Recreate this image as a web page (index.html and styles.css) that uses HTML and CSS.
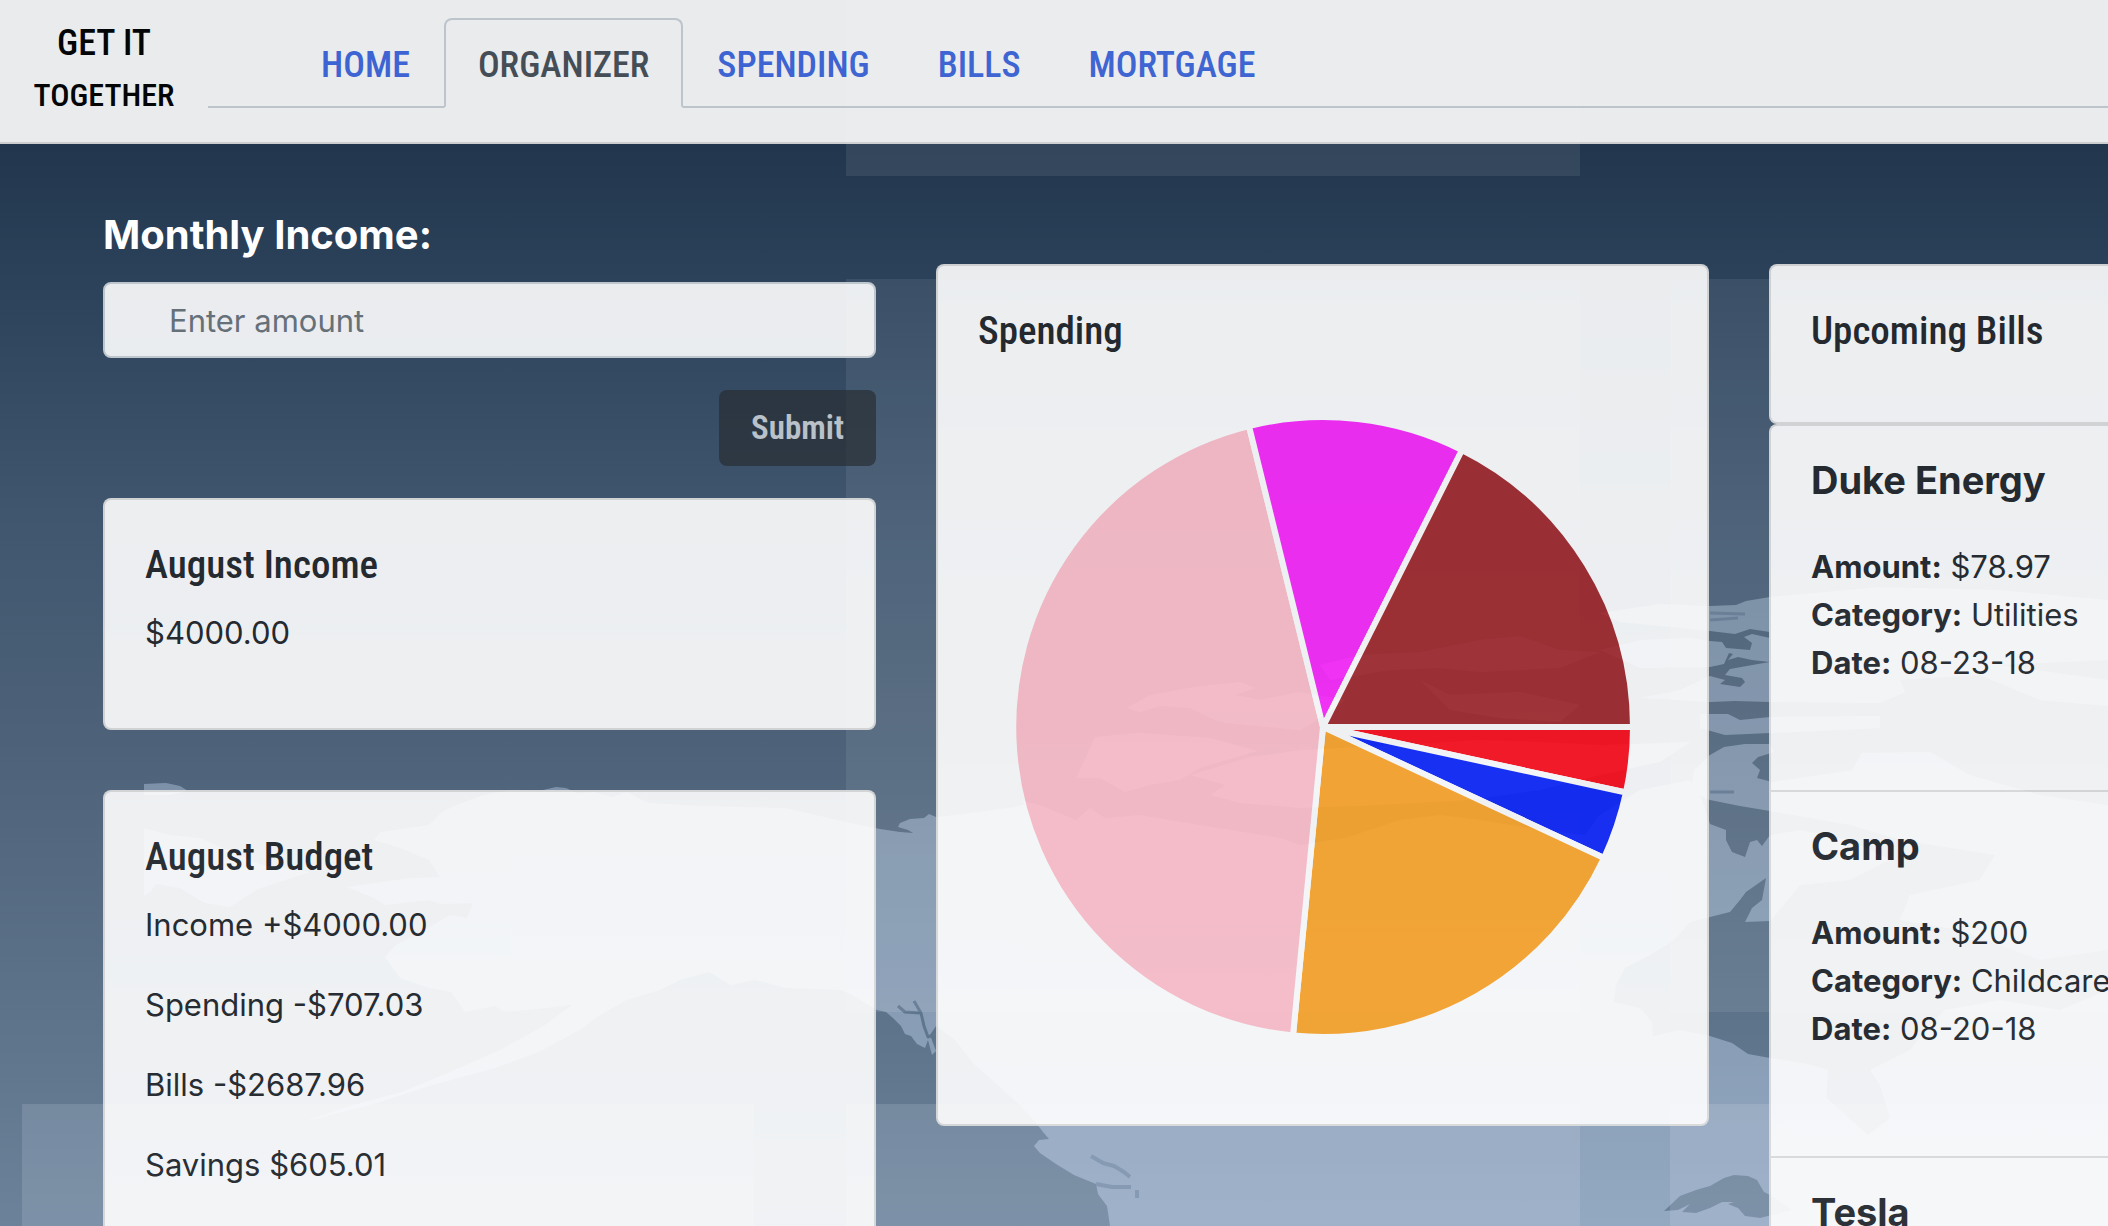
FILE: index.html
```
<!DOCTYPE html>
<html lang="en">
<head>
<meta charset="utf-8">
<meta name="viewport" content="width=device-width, initial-scale=1">
<title>Get It Together - Organizer</title>
<link rel="stylesheet" href="styles.css">
</head>
<body>
<div class="page">
  <svg class="backdrop" viewBox="0 0 2108 1226" preserveAspectRatio="xMidYMin slice" aria-hidden="true">
    <defs>
      <linearGradient id="land" gradientUnits="userSpaceOnUse" x1="0" y1="600" x2="0" y2="1226">
        <stop offset="0" stop-color="#a4b8d0"/>
        <stop offset="1" stop-color="#bacee8"/>
      </linearGradient>
    </defs>
    <g fill="url(#land)" opacity=".5" fill-rule="evenodd">
      <!-- eastern Siberia -->
      <path d="M144 784L166 783L180 786L188 791L170 795L144 795Z"/>
      <path d="M144 828L170 835L200 838L232 852L262 865L310 872L288 879L258 889L230 907L205 903L180 888L156 884L150 892L144 896Z"/>
      <!-- Alaska and mainland Canada, with the great lake cut out -->
      <path d="M374 840L380 832L429 825L442 812L456 805L484 795L510 790L539 791L556 787L566 788L577 793L594 792L612 797L627 792L648 803L703 806L786 808L846 822L880 829L900 832L913 833L908 830L898 827L900 823L910 819L924 818L929 814L936 817L955 815L1015 807L1025 804L1020 800L1040 805L1076 820L1090 808L1105 818L1140 815L1200 825L1280 838L1300 845L1345 838L1400 820L1440 815L1480 820L1540 830L1585 835L1600 815L1640 790L1690 780L1702 800L1710 824V917L1690 922L1674 940L1650 955L1625 968L1616 985L1614 1002L1640 1008L1652 1022L1653 1036L1680 1030L1710 1036L1732 1043L1748 1054L1770 1058L1808 1064L1828 1070L1826 1098L1840 1110L1868 1135L1890 1118L1880 1085L1870 1070L1910 1050L1930 1025L1945 1010L2000 1000L2060 1010L2108 990V1226H1110L1107 1206L1098 1194L1096 1184L1074 1175L1056 1164L1040 1153L1034 1146L1039 1140L1049 1139L1043 1132L1037 1124L1020 1105L998 1085L975 1065L955 1040L936 1026L930 1035L936 1051L932 1055L928 1040L925 1048L917 1044L911 1036L905 1034L901 1026L893 1018L886 1012L877 1010L850 994L840 990L786 988L755 980L731 985L709 972L680 980L660 990L627 1000L600 1015L583 1028L539 1052L495 1068L429 1086L380 1102L303 1122L350 1106L402 1092L450 1072L500 1050L545 1025L572 1005L539 1009L505 1012L495 1006L465 1012L451 992L429 988L400 978L385 957L396 945L425 930L450 915L467 918L473 903L440 904L429 900L385 905L374 898L347 887L410 878L440 877L429 860L400 848ZM1664 1211L1680 1196L1696 1190L1710 1186L1724 1178L1734 1175L1748 1176L1757 1180L1764 1192L1772 1196L1792 1210L1760 1218L1745 1216L1738 1208L1728 1204L1734 1202L1722 1202L1710 1208L1696 1213L1682 1212L1690 1204L1678 1210Z"/>
      <!-- Arctic islands -->
      <path d="M1127 708L1150 695L1195 687L1240 682L1255 688L1235 695L1260 700L1300 692L1345 700L1330 712L1300 730L1220 722L1190 708L1160 706L1140 712Z"/>
      <path d="M1095 737L1140 733L1210 738L1258 751L1200 768L1180 780L1150 785L1125 792L1100 778L1076 778Z"/>
      <path d="M1250 757L1300 750L1400 745L1480 740L1540 742L1600 745L1690 742L1660 762L1600 775L1540 790L1470 800L1380 805L1300 808L1240 803L1210 795L1225 785L1190 775Z"/>
      <path d="M1320 665L1360 655L1420 652L1480 640L1520 636L1560 650L1600 652L1560 668L1480 672L1440 668L1390 670L1330 680Z"/>
      <path d="M1420 680L1450 695L1520 692L1580 705L1560 722L1500 718L1450 710Z"/>
      <path d="M1600 613L1660 604L1710 606L1736 605L1746 601L1770 597L1880 587L2000 590L2108 600V660L2000 665L2108 680V706L2040 700L1980 675L1900 680L1905 692L1880 703L1770 702L1735 701L1710 702L1640 698L1680 690L1710 676L1725 680L1720 684L1740 687L1745 682L1742 678L1725 675L1730 669L1758 664L1770 662L1752 660L1738 657L1728 660L1733 654L1729 653L1724 664L1710 667L1640 668L1600 650L1640 640L1690 638L1710 641L1722 642L1726 648L1750 650L1752 643L1744 637L1752 634L1770 638V632L1750 629L1735 634L1710 631L1620 622Z"/>
      <path d="M1700 714L1728 714L1740 720L1770 717L1880 716L1880 728L1770 733L1725 735L1700 728Z"/>
      <path d="M1694 770L1710 755L1724 747L1745 744L1770 744L1774 752L1768 754L1758 757L1752 763L1760 770L1757 778L1772 782L1852 770L1862 753L1930 752L1970 775L2040 795L2108 805V950L2040 960L1960 930L1900 920L1910 895L1980 880L1995 855L1900 840L1850 825L1770 811L1740 806L1725 803L1710 800L1690 792Z"/>
      <path d="M1710 824L1726 830L1726 840L1732 852L1745 857L1750 842L1757 840L1762 846L1770 835L1800 830L1850 840L1890 860L1850 880L1800 885L1770 921L1745 922L1752 908L1762 900L1766 878L1756 885L1746 892L1740 900L1730 912L1710 917Z"/>
    </g>
    <!-- inlets and straits -->
    <g fill="none" stroke="#5f768f" stroke-width="3" stroke-linejoin="round">
      <path d="M898 1006L905 1012L921 1013L914 1001M921 1013L924 1026L928 1037L936 1034"/>
      <path d="M1710 792L1734 792M1710 613L1745 614M1710 620L1738 618"/>
      <path stroke="#768da7" stroke-width="4" d="M1091 1156L1103 1163L1114 1166L1124 1172L1130 1177M1096 1184L1112 1187L1131 1187M1137 1190V1198"/>
    </g>
    <!-- translucent panels -->
    <g fill="#fff" fill-opacity=".08">
      <rect x="846" y="-10" width="734" height="186"/>
      <rect x="846" y="279" width="734" height="733"/>
      <rect x="1670" y="279" width="734" height="733"/>
    </g>
    <g fill="#e8f2ff" fill-opacity=".14">
      <rect x="22" y="1104" width="732" height="200"/>
      <rect x="846" y="1104" width="734" height="200"/>
      <rect x="1670" y="1104" width="734" height="200"/>
    </g>
  </svg>

  <header class="navbar">
    <a class="brand" href="#"><span class="brand-top">GET IT</span><span class="brand-bottom">TOGETHER</span></a>
    <nav class="tabs">
      <a class="tab" href="#">HOME</a>
      <a class="tab tab-active" href="#" aria-current="page">ORGANIZER</a>
      <a class="tab" href="#">SPENDING</a>
      <a class="tab" href="#">BILLS</a>
      <a class="tab" href="#">MORTGAGE</a>
    </nav>
  </header>

  <main class="board">
    <div class="column">
      <form class="income-form">
        <label class="income-label" for="income">Monthly Income:</label>
        <input class="income-input" id="income" type="text" placeholder="Enter amount">
        <button class="submit" type="submit" disabled>Submit</button>
      </form>
      <section class="card">
        <h2 class="card-title">August Income</h2>
        <p class="line">$4000.00</p>
      </section>
      <section class="card">
        <h2 class="card-title">August Budget</h2>
        <p class="line">Income +$4000.00</p>
        <p class="line">Spending -$707.03</p>
        <p class="line">Bills -$2687.96</p>
        <p class="line">Savings $605.01</p>
      </section>
    </div>

    <div class="column column-offset">
      <section class="card">
        <h2 class="card-title">Spending</h2>
        <svg class="pie" viewBox="-310 -310 620 620" role="img" aria-label="Spending by category">
          <g stroke="#fff" stroke-width="6" stroke-linejoin="round">
            <path fill="#fd0d1b" d="M0 0L310 0A310 310 0 0 1 303 65.5Z"/>
            <path fill="#0d25fa" d="M0 0L303 65.5A310 310 0 0 1 281 131Z"/>
            <path fill="#fda529" d="M0 0L281 131A310 310 0 0 1 -30 308.500Z"/>
            <path fill="#ffc0cb" d="M0 0L-30 308.500A310 310 0 0 1 -74 -301Z"/>
            <path fill="#fb28fc" d="M0 0L-74 -301A310 310 0 0 1 139 -277Z"/>
            <path fill="#a22a2d" d="M0 0L139 -277A310 310 0 0 1 310 0Z"/>
          </g>
        </svg>
      </section>
    </div>

    <div class="column column-offset">
      <section class="card card-head">
        <h2 class="card-title">Upcoming Bills</h2>
      </section>
      <ul class="bills">
        <li class="bill">
          <h3 class="bill-name">Duke Energy</h3>
          <p class="bill-line"><b>Amount:</b> $78.97</p>
          <p class="bill-line"><b>Category:</b> Utilities</p>
          <p class="bill-line"><b>Date:</b> 08-23-18</p>
        </li>
        <li class="bill">
          <h3 class="bill-name">Camp</h3>
          <p class="bill-line"><b>Amount:</b> $200</p>
          <p class="bill-line"><b>Category:</b> Childcare</p>
          <p class="bill-line"><b>Date:</b> 08-20-18</p>
        </li>
        <li class="bill">
          <h3 class="bill-name">Tesla</h3>
        </li>
      </ul>
    </div>
  </main>
</div>
</body>
</html>
```
FILE: styles.css
```
* { box-sizing: border-box; }

body {
  margin: 0;
  color: #212529;
  font: 31px/48px Inter, "Liberation Sans", sans-serif;
}

.page {
  position: relative;
  height: 100vh;
  overflow: hidden;
  background: linear-gradient(#22374e 0, #22374e 12%, #2d445c 25%, #3f566e 42%, #4d6279 60%, #5e748b 84%, #6c829a 100%);
}

/* map artwork behind all content */
.backdrop {
  position: absolute;
  inset: 0;
  width: 100%;
  height: 100%;
}

.navbar {
  position: relative;
  display: flex;
  align-items: flex-start;
  height: 144px;
  background: #fff;
  border-bottom: 2px solid #dfdfdf;
  opacity: .9;
}

.brand {
  display: flex;
  flex-direction: column;
  flex: 0 0 208px;
  padding-top: 17px;
  color: #000;
  font-family: "Roboto Condensed", Roboto, sans-serif;
  font-weight: 500;
  line-height: 52px;
  text-align: center;
  text-decoration: none;
}
.brand-top { font-size: 36px; }
.brand-bottom { font-size: 32px; }

.tabs {
  display: flex;
  flex: 1;
  height: 90px;
  margin-top: 18px;
  padding-left: 79px;
  border-bottom: 2px solid #ced4da;
}
.tab {
  height: 90px;
  padding: 0 32px;
  border: 2px solid transparent;
  border-radius: 8px 8px 0 0;
  color: #4169e1;
  font: 500 36px/90px "Roboto Condensed", Roboto, sans-serif;
  text-decoration: none;
}
.tab-active {
  border-color: #ced4da #ced4da #fff;
  background: #fff;
  color: #495057;
}

.board {
  position: relative;
  display: grid;
  grid-template-columns: repeat(3, minmax(773px, 1fr));
  align-items: start;
  gap: 60px;
  padding: 67px 103px;
}
.column-offset { padding-top: 53px; }

.income-form {
  display: flex;
  flex-direction: column;
  margin-bottom: 32px;
}
.income-label {
  margin-bottom: 23px;
  color: #fff;
  font-size: 40px;
  font-weight: 700;
}
.income-input {
  height: 76px;
  margin-bottom: 32px;
  padding: 0 64px;
  border: 2px solid #ced4da;
  border-radius: 8px;
  background: #fff;
  font: inherit;
  opacity: .9;
}
.income-input::placeholder { color: #6c757d; opacity: 1; }
.submit {
  align-self: flex-end;
  height: 76px;
  padding: 0 32px;
  border: 0;
  border-radius: 8px;
  background: #272b30;
  color: #fff;
  font: 600 33px/48px "Roboto Condensed", Roboto, sans-serif;
  opacity: .65;
}

.card {
  margin-bottom: 60px;
  padding: 41px 40px 39px;
  border: 2px solid rgba(0, 0, 0, .125);
  border-radius: 8px;
  background: #fff;
  opacity: .9;
}
.card-head {
  margin: 0;
  padding-bottom: 47px;
}
.card-title {
  margin: 0 0 20px;
  font: 500 39px/48px "Roboto Condensed", Roboto, sans-serif;
}
.line { margin: 0 0 32px; }

.pie {
  display: block;
  width: 90%;
  max-width: 620px;
  margin: 62px auto 48px;
  overflow: visible;
}

.bills {
  margin: 0;
  padding: 0;
  border: 2px solid rgba(0, 0, 0, .125);
  border-radius: 8px;
  background: #fff;
  list-style: none;
  opacity: .9;
}
.bill {
  min-height: 366px;
  padding: 30px 40px;
  border-bottom: 2px solid rgba(0, 0, 0, .125);
}
.bill-name {
  margin: 0 0 39px;
  font-size: 38px;
  font-weight: 700;
  line-height: 48px;
}
.bill-line { margin: 0; }
```
